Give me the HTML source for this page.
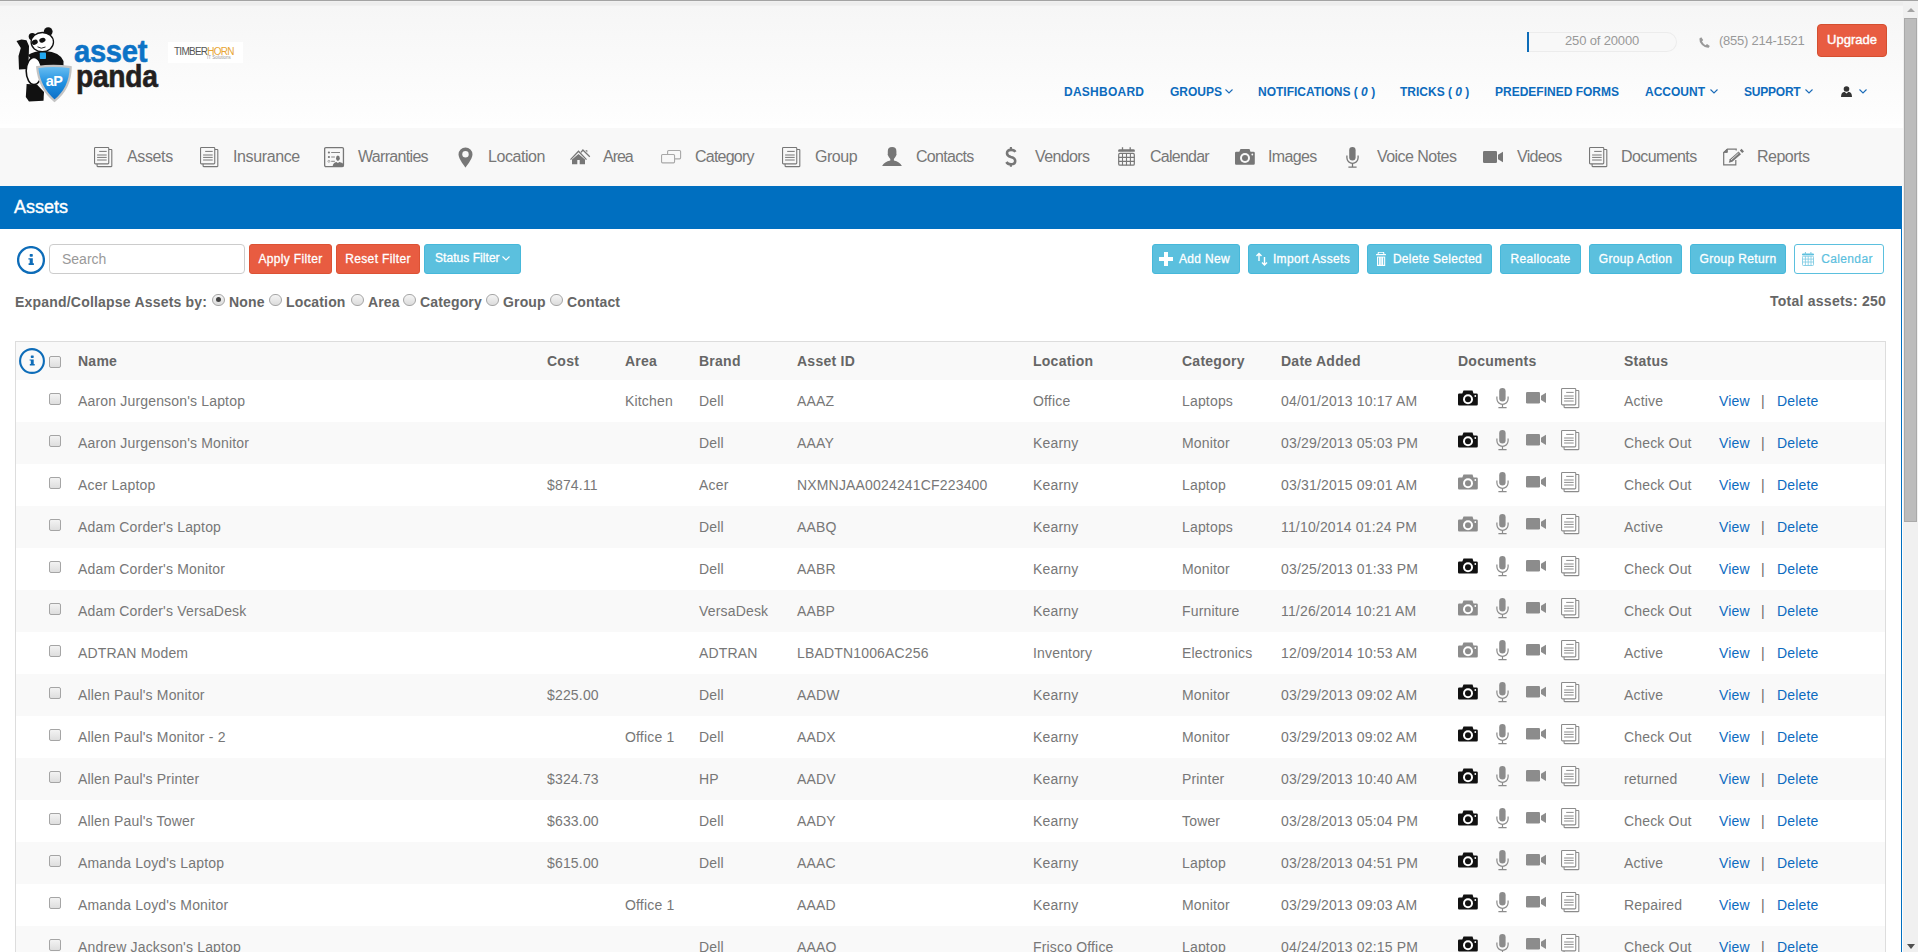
<!DOCTYPE html>
<html><head><meta charset="utf-8"><title>Asset Panda</title><style>
*{box-sizing:border-box}
html,body{margin:0;padding:0}
body{width:1918px;height:952px;overflow:hidden;position:relative;background:#fff;font-family:"Liberation Sans",sans-serif;color:#777}
.a{position:absolute}
#topline{left:0;top:0;width:1918px;height:1px;background:#a3a3a3}
#topband{left:0;top:1px;width:1903px;height:5px;background:linear-gradient(#f3f3f3,#ededed 20%,#ededed 80%,#f3f3f3)}
#header{left:0;top:6px;width:1903px;height:122px;background:linear-gradient(#f6f6f6,#fefefe 97%,#fff 97%)}
#nav{left:0;top:128px;width:1903px;height:58px;background:#f8f8f8}
#bluebar{left:0;top:186px;width:1902px;height:43px;background:#006fc0}
#blueline{left:1901px;top:229px;width:1px;height:723px;background:#006fc0}
#sb{left:1903px;top:1px;width:15px;height:951px;background:#f0f0f0}
#thumb{left:1904px;top:18px;width:13px;height:504px;background:#bcbcbc;border:1px solid #a9a9a9}
.nl{position:absolute;top:127px;height:59px;line-height:59px;font-size:16px;color:#777;white-space:nowrap;letter-spacing:-0.45px}
.tn{position:absolute;top:84.5px;font-size:12px;font-weight:bold;color:#0d6bbd;white-space:nowrap;line-height:15px}
.tn i{font-style:italic}
.btn{position:absolute;top:244px;height:30px;border-radius:3px;color:#fff;font-size:12px;line-height:28px;text-align:center;white-space:nowrap;-webkit-text-stroke:0.3px #fff;letter-spacing:0.35px}
.red{background:#e85c41;border:1px solid #dc5234}
.blu{background:#5bc0de;border:1px solid #46b8da}
.row{position:absolute;left:16px;width:1869px;height:42px}
.row .c{position:absolute;top:0;line-height:42px;font-size:14px;color:#777;white-space:nowrap;margin-left:-16px;letter-spacing:0.17px}
.row .lk{color:#0d6bbf}
.row .pp{color:#6a6a6a}
.row .cb{left:33px}
.cb{position:absolute;width:12px;height:12px;border:1px solid #a5a5a5;border-radius:2px;background:linear-gradient(#f3f3f3,#dedede)}
.ic{position:absolute;margin-left:-16px;top:0}
.th{position:absolute;line-height:38px;font-size:14px;font-weight:bold;color:#666;white-space:nowrap;letter-spacing:0.25px}
.rad{position:absolute;top:293.5px;width:12.5px;height:12.5px;border:1px solid #a5a5a5;border-radius:50%;background:linear-gradient(#f5f5f5,#dcdcdc)}
.rad i{position:absolute;left:2.5px;top:2.5px;width:5px;height:5px;border-radius:50%;background:#444}
.rl{position:absolute;top:292px;line-height:20px;font-size:14px;font-weight:bold;color:#666;white-space:nowrap;letter-spacing:0.15px}
</style></head>
<body>
<div class="a" id="topline"></div>
<div class="a" id="topband"></div>
<div class="a" id="header"></div>

<svg class="a" style="left:15px;top:25px" width="60" height="80" viewBox="0 0 60 80">
 <defs><linearGradient id="shg" x1="0" y1="0" x2="0" y2="1"><stop offset="0" stop-color="#6cc0f2"/><stop offset=".5" stop-color="#1f8fe0"/><stop offset="1" stop-color="#0b6cc4"/></linearGradient></defs>
 <circle cx="17.3" cy="11.6" r="3.6" fill="#111"/>
 <circle cx="33.2" cy="6.6" r="4.4" fill="#111"/>
 <path d="M1.5 16L6.5 14.6 11.5 15.2 14 21 13.8 30 13.2 44 4 44.5 3.5 31 5.8 23z" fill="#111"/>
 <path d="M13 30Q20 25.5 30 26Q45 27 48.5 36L48.5 41.5 30 42.5 22 38Q16 35 13 30z" fill="#111"/>
 <ellipse cx="19" cy="46" rx="7.8" ry="13.6" fill="#fff" stroke="#111" stroke-width="1.6"/>
 <path d="M11.6 59L10.8 72 14 76.5 28.5 75.8 29 67 22 59.5z" fill="#111"/>
 <ellipse cx="27.3" cy="17.1" rx="11.2" ry="9.6" fill="#fff" stroke="#111" stroke-width="1.3"/>
 <ellipse cx="19.8" cy="17.2" rx="3.1" ry="2.4" fill="#111" transform="rotate(-30 19.8 17.2)"/>
 <ellipse cx="27.4" cy="15.2" rx="3.2" ry="2.3" fill="#111" transform="rotate(-15 27.4 15.2)"/>
 <path d="M22.5 21.8Q26 24.5 30.5 22" fill="none" stroke="#111" stroke-width="0.9"/>
 <rect x="24.8" y="27.5" width="6.2" height="6.6" rx="0.8" fill="#22a8f0"/>
 <path d="M22.2 42.2Q38 39.5 55.7 42.2Q55.5 63 39.5 75.8Q24 63 22.2 42.2z" fill="url(#shg)" stroke="#c4c4c4" stroke-width="2.2"/>
 <text x="39" y="60.5" font-family="Liberation Sans" font-weight="bold" font-size="14.5" fill="#fff" text-anchor="middle" letter-spacing="-0.6">aP</text>
</svg>
<div class="a" style="left:74px;top:35px;font-size:32px;font-weight:bold;color:#0d73c6;line-height:32px;-webkit-text-stroke:0.6px #0d73c6;transform:scaleX(0.91);transform-origin:0 0;letter-spacing:-0.3px">asset</div>
<div class="a" style="left:76px;top:60.7px;font-size:31px;font-weight:bold;color:#231f20;line-height:31px;-webkit-text-stroke:0.6px #231f20;transform:scaleX(0.91);transform-origin:0 0;letter-spacing:-0.3px">panda</div>
<div class="a" style="left:168px;top:42px;width:75px;height:21px;background:#fff"></div>
<div class="a" style="left:174px;top:46px;font-size:10px;color:#555;line-height:11px;letter-spacing:-0.75px">TIMBER<span style="color:#e8a534">HORN</span></div>
<div class="a" style="left:207px;top:55px;font-size:4.5px;color:#999;line-height:5px">IT Solutions</div>


<div class="a" style="left:1527px;top:32px;width:150px;height:20px;border:1px solid #ececec;border-left:none;border-radius:0 10px 10px 0;background:#f8f8f8"></div>
<div class="a" style="left:1527px;top:32px;width:2px;height:20px;background:#0d6cb8"></div>
<div class="a" style="left:1565px;top:31px;line-height:20px;font-size:13px;color:#999;letter-spacing:-0.15px">250 of 20000</div>
<svg class="a" style="left:1699px;top:37px" width="11" height="11" viewBox="0 0 11 11"><path d="M2.3 0.3L4.2 3.1 3 4.6Q4.2 7 6.6 8.2L8 7 10.8 8.9 9.7 10.7Q6 11 3 8 0 5 0.4 1.4z" fill="#999"/></svg>
<div class="a" style="left:1719px;top:31px;line-height:20px;font-size:13px;color:#999;letter-spacing:-0.25px">(855) 214-1521</div>
<div class="a" style="left:1817px;top:24px;width:70px;height:33px;border-radius:4px;background:#e85c41;border:1px solid #d44f30;color:#fff;font-size:13px;line-height:30px;text-align:center;-webkit-text-stroke:0.4px #fff">Upgrade</div>


<span class="tn" style="left:1064px;letter-spacing:0.25px">DASHBOARD</span>
<span class="tn" style="left:1170px">GROUPS</span><svg class="a" style="left:1225px;top:89px" width="8" height="5" viewBox="0 0 8 5"><path d="M0.5 0.5L4 4 7.5 0.5" fill="none" stroke="#1a6bb8" stroke-width="1.1"/></svg>
<span class="tn" style="left:1258px">NOTIFICATIONS ( <i>0</i> )</span>
<span class="tn" style="left:1400px">TRICKS ( <i>0</i> )</span>
<span class="tn" style="left:1495px">PREDEFINED FORMS</span>
<span class="tn" style="left:1645px">ACCOUNT</span><svg class="a" style="left:1710px;top:89px" width="8" height="5" viewBox="0 0 8 5"><path d="M0.5 0.5L4 4 7.5 0.5" fill="none" stroke="#1a6bb8" stroke-width="1.1"/></svg>
<span class="tn" style="left:1744px;letter-spacing:-0.22px">SUPPORT</span><svg class="a" style="left:1805px;top:89px" width="8" height="5" viewBox="0 0 8 5"><path d="M0.5 0.5L4 4 7.5 0.5" fill="none" stroke="#1a6bb8" stroke-width="1.1"/></svg>
<svg class="a" style="left:1841px;top:86px" width="11" height="11" viewBox="0 0 11 11"><circle cx="5.5" cy="3" r="2.8" fill="#333"/><path d="M0 11C0 7.5 1.5 6 3.5 5.8L5.5 7.5 7.5 5.8C9.5 6 11 7.5 11 11z" fill="#333"/></svg>
<svg class="a" style="left:1859px;top:89px" width="8" height="5" viewBox="0 0 8 5"><path d="M0.5 0.5L4 4 7.5 0.5" fill="none" stroke="#1a6bb8" stroke-width="1.1"/></svg>

<div class="a" id="nav"></div>
<svg class="a" style="left:94px;top:147px" width="19" height="21" viewBox="0 0 19 21"><path d="M14.8 2.45H17.2a.6.6 0 0 1 .6.6V19a.6.6 0 0 1-.6.6H3.7a.6.6 0 0 1-.6-.6V16.9" fill="#f8f8f8" stroke="#777" stroke-width="1.1"/><rect x="0.55" y="0.55" width="14.2" height="16.3" rx="0.8" fill="#f8f8f8" stroke="#777" stroke-width="1.1"/><path d="M5.2 4.4H12.7M3.1 8H12.7M3.1 10.4H12.7M3.1 13H12.7" stroke="#777" stroke-width="1"/></svg><svg class="a" style="left:200px;top:147px" width="19" height="21" viewBox="0 0 19 21"><path d="M14.8 2.45H17.2a.6.6 0 0 1 .6.6V19a.6.6 0 0 1-.6.6H3.7a.6.6 0 0 1-.6-.6V16.9" fill="#f8f8f8" stroke="#777" stroke-width="1.1"/><rect x="0.55" y="0.55" width="14.2" height="16.3" rx="0.8" fill="#f8f8f8" stroke="#777" stroke-width="1.1"/><path d="M5.2 4.4H12.7M3.1 8H12.7M3.1 10.4H12.7M3.1 13H12.7" stroke="#777" stroke-width="1"/></svg><svg class="a" style="left:324px;top:147px" width="21" height="21" viewBox="0 0 21 21"><rect x="0.65" y="0.65" width="18.8" height="18.9" rx="1.2" fill="none" stroke="#777" stroke-width="1.3"/><circle cx="4.9" cy="5.5" r="1.1" fill="#777"/><circle cx="4.9" cy="10" r="1.1" fill="#777"/><circle cx="4.9" cy="14.3" r="1" fill="none" stroke="#777" stroke-width="0.6"/><path d="M7.2 5.5H16M7.2 10H10.9M7.2 14.3H10.9" stroke="#777" stroke-width="0.9"/><ellipse cx="13.9" cy="11.3" rx="1.9" ry="2.7" fill="#777"/><path d="M8.6 19.6Q9 15.6 12.4 15L13.9 16 15.4 15Q19 15.6 19.5 17.6V19.6z" fill="#777"/></svg><svg class="a" style="left:458px;top:147px" width="15" height="21" viewBox="0 0 15 21"><path d="M7.5 0.5A7 7 0 0 0 0.5 7.5C0.5 12 7.5 20.5 7.5 20.5S14.5 12 14.5 7.5A7 7 0 0 0 7.5 0.5z" fill="#777"/><circle cx="7.5" cy="7.3" r="3.2" fill="#f8f8f8"/></svg><svg class="a" style="left:570px;top:149px" width="21" height="16" viewBox="0 0 21 16"><path d="M0.5 10.6L8.5 2.3 16.5 10.6" fill="none" stroke="#777" stroke-width="1.3"/><path d="M8.5 4.9L15 10.6V15.3H9.7V10.9H7.3V15.3H2V10.6z" fill="#777"/><path d="M11 3.4L12.9 1 19.8 7.8" fill="none" stroke="#777" stroke-width="1.3"/><path d="M15.3 1.2L17.3 1.2 17.3 3.6z" fill="#777"/></svg><svg class="a" style="left:661px;top:150px" width="21" height="14" viewBox="0 0 21 14"><rect x="6.6" y="0.55" width="13" height="8.3" rx="1" fill="none" stroke="#a8a8a8" stroke-width="1.1"/><rect x="0.55" y="4.55" width="13" height="8.3" rx="1" fill="#f8f8f8" stroke="#a8a8a8" stroke-width="1.1"/></svg><svg class="a" style="left:782px;top:147px" width="19" height="21" viewBox="0 0 19 21"><path d="M14.8 2.45H17.2a.6.6 0 0 1 .6.6V19a.6.6 0 0 1-.6.6H3.7a.6.6 0 0 1-.6-.6V16.9" fill="#f8f8f8" stroke="#777" stroke-width="1.1"/><rect x="0.55" y="0.55" width="14.2" height="16.3" rx="0.8" fill="#f8f8f8" stroke="#777" stroke-width="1.1"/><path d="M5.2 4.4H12.7M3.1 8H12.7M3.1 10.4H12.7M3.1 13H12.7" stroke="#777" stroke-width="1"/></svg><svg class="a" style="left:882px;top:147px" width="20" height="20" viewBox="0 0 20 20"><path d="M5.8 4.3Q5.8 0.1 10.1 0.1Q14.4 0.1 14.4 4.3V7Q14.9 7.6 14.3 8.3Q13.2 10.8 11.9 12.1V13.6Q17.6 14.6 19.9 19.1H0.1Q2.4 14.6 8.3 13.6V12.1Q7 10.8 5.9 8.3Q5.3 7.6 5.8 7z" fill="#777"/></svg><svg class="a" style="left:1005px;top:146px" width="12" height="22" viewBox="0 0 12 22"><path d="M10.4 5.9Q9.2 3.9 6 3.9Q2 3.9 2 7.3Q2 10 5.9 11.1Q10.2 12.2 10.2 15Q10.2 18.3 6 18.3Q2.7 18.3 1.4 16" fill="none" stroke="#777" stroke-width="2.6"/><path d="M5.9 1V4M5.9 18V20.8" stroke="#777" stroke-width="2.1"/></svg><svg class="a" style="left:1118px;top:147px" width="17" height="19" viewBox="0 0 17 19"><path d="M0.2 4.8V3.6Q0.2 2.2 1.6 2.2H15.3Q16.8 2.2 16.8 3.6V4.8z" fill="#777"/><path d="M4.5 0.2V4.2M12.2 0.2V4.2" stroke="#777" stroke-width="1.3"/><rect x="0.7" y="6.4" width="15.6" height="11.8" rx="1.3" fill="none" stroke="#777" stroke-width="1.2"/><path d="M4.5 6.4V18.2M8.5 6.4V18.2M12.4 6.4V18.2M0.7 10.4H16.3M0.7 14.4H16.3" stroke="#777" stroke-width="1.1"/></svg><svg class="a" style="left:1235px;top:149px" width="20" height="16" viewBox="0 0 20 16"><path d="M5.5 0h9l1 2.8h3a1.3 1.3 0 0 1 1.3 1.3v10.4a1.3 1.3 0 0 1-1.3 1.3h-17A1.3 1.3 0 0 1 0 14.5V4.1A1.3 1.3 0 0 1 1.3 2.8h3z" fill="#777"/><circle cx="10" cy="9" r="5" fill="#f8f8f8"/><circle cx="10" cy="9" r="3" fill="#777"/><circle cx="17.3" cy="5.5" r="0.9" fill="#f8f8f8"/></svg><svg class="a" style="left:1346px;top:147px" width="13" height="21" viewBox="0 0 13 21"><rect x="3.2" y="0" width="6.4" height="13.5" rx="3.2" fill="#777"/><path d="M0.9 8.5v2.3a5.6 5.6 0 0 0 11.2 0V8.5" fill="none" stroke="#777" stroke-width="1.3"/><path d="M6.5 16.5v3.3M2.4 20.2h8.2" stroke="#777" stroke-width="1.3" fill="none"/></svg><svg class="a" style="left:1483px;top:151px" width="20" height="12" viewBox="0 0 20 12"><rect x="0" y="0" width="14" height="12" rx="1.3" fill="#777"/><path d="M15 3.8L20 0.8V11.2L15 8.2z" fill="#777"/></svg><svg class="a" style="left:1589px;top:147px" width="19" height="21" viewBox="0 0 19 21"><path d="M14.8 2.45H17.2a.6.6 0 0 1 .6.6V19a.6.6 0 0 1-.6.6H3.7a.6.6 0 0 1-.6-.6V16.9" fill="#f8f8f8" stroke="#777" stroke-width="1.1"/><rect x="0.55" y="0.55" width="14.2" height="16.3" rx="0.8" fill="#f8f8f8" stroke="#777" stroke-width="1.1"/><path d="M5.2 4.4H12.7M3.1 8H12.7M3.1 10.4H12.7M3.1 13H12.7" stroke="#777" stroke-width="1"/></svg><svg class="a" style="left:1722px;top:148px" width="23" height="18" viewBox="0 0 23 18"><path d="M5.3 1.1H14.2V2.4M13.8 12V16.8H1.7V4.4L5.3 1.1" fill="none" stroke="#777" stroke-width="1.2"/><path d="M1.7 4.4L5.3 1.1V4.4z" fill="#777" stroke="#777" stroke-width="1"/><path d="M6.8 14.8L7.8 11.2 16.6 3.6 19 6.2 10.3 13.8z" fill="#777"/><path d="M9 12L16.5 5.2" stroke="#f8f8f8" stroke-width="0.8"/><path d="M17.8 2.4L19.6 0.8 22 3.4 20.2 5z" fill="#777"/></svg>
<span class="nl" style="left:127px;letter-spacing:-0.370px">Assets</span><span class="nl" style="left:233px;letter-spacing:-0.388px">Insurance</span><span class="nl" style="left:358px;letter-spacing:-0.683px">Warranties</span><span class="nl" style="left:488px;letter-spacing:-0.450px">Location</span><span class="nl" style="left:603px;letter-spacing:-1.017px">Area</span><span class="nl" style="left:695px;letter-spacing:-0.779px">Category</span><span class="nl" style="left:815px;letter-spacing:-0.450px">Group</span><span class="nl" style="left:916px;letter-spacing:-0.693px">Contacts</span><span class="nl" style="left:1035px;letter-spacing:-0.617px">Vendors</span><span class="nl" style="left:1150px;letter-spacing:-0.750px">Calendar</span><span class="nl" style="left:1268px;letter-spacing:-0.650px">Images</span><span class="nl" style="left:1377px;letter-spacing:-0.550px">Voice Notes</span><span class="nl" style="left:1517px;letter-spacing:-0.690px">Videos</span><span class="nl" style="left:1621px;letter-spacing:-0.588px">Documents</span><span class="nl" style="left:1757px;letter-spacing:-0.517px">Reports</span>
<div class="a" id="bluebar"></div>
<div class="a" id="blueline"></div>
<div class="a" style="left:14px;top:186px;height:43px;line-height:43px;font-size:18px;color:#fff;-webkit-text-stroke:0.4px #fff">Assets</div>

<svg class="a" style="left:17px;top:246px" width="28" height="28" viewBox="0 0 28 28"><circle cx="14" cy="14" r="12.9" fill="#fff" stroke="#0d6cb8" stroke-width="2.3"/><rect x="12.7" y="8.1" width="3.1" height="2.6" rx="0.6" fill="#0d6cb8"/><path d="M11.4 12.3H15.8V17.3H16.9V18.9H11.6V17.3H12.7V13.6H11.4z" fill="#0d6cb8"/></svg>
<div class="a" style="left:49px;top:244px;width:196px;height:30px;border:1px solid #ccc;border-radius:4px;background:#fff"></div>
<div class="a" style="left:62px;top:244px;line-height:30px;font-size:14px;color:#999">Search</div>
<div class="btn red" style="left:249px;width:83px">Apply Filter</div>
<div class="btn red" style="left:336px;width:84px">Reset Filter</div>
<div class="btn blu" style="left:424px;width:97px"></div><div class="a" style="left:435px;top:244px;line-height:28px;font-size:12px;color:#fff;-webkit-text-stroke:0.3px #fff;letter-spacing:0.05px">Status Filter</div><svg class="a" style="left:502px;top:256px" width="8" height="5" viewBox="0 0 8 5"><path d="M0.5 0.5L4 4 7.5 0.5" fill="none" stroke="#fff" stroke-width="1.1"/></svg>
<div class="btn blu" style="left:1152px;width:88px;padding-left:17px">Add New</div>
<svg class="a" style="left:1159px;top:252px" width="14" height="14" viewBox="0 0 14 14"><path d="M5 0h4v5h5v4H9v5H5V9H0V5h5z" fill="#fff"/></svg>
<div class="btn blu" style="left:1248px;width:111px;padding-left:16px">Import Assets</div>
<svg class="a" style="left:1256px;top:252px" width="12" height="14" viewBox="0 0 12 14"><path d="M3 1.5v7.5M0.5 4L3 1.5 5.5 4M8.5 5v8M6 10.5L8.5 13 11 10.5" fill="none" stroke="#fff" stroke-width="1.4"/></svg>
<div class="btn blu" style="left:1367px;width:125px;padding-left:16px;letter-spacing:0.3px">Delete Selected</div>
<svg class="a" style="left:1376px;top:252px" width="10" height="14" viewBox="0 0 10 14"><path d="M2.2 2.2V1.2Q2.2 0.2 3.2 0.2H6.8Q7.8 0.2 7.8 1.2V2.2" fill="none" stroke="#fff" stroke-width="1.1"/><rect x="0" y="2" width="10" height="1.3" rx="0.5" fill="#fff"/><rect x="1" y="4.6" width="8.2" height="9.4" fill="#fff"/><path d="M2.6 5.5V12.8M7.6 5.5V12.8" stroke="#5bc0de" stroke-width="0.9"/><path d="M5.1 5.5V12.8" stroke="#9fdaec" stroke-width="0.9"/></svg>
<div class="btn blu" style="left:1500px;width:81px">Reallocate</div>
<div class="btn blu" style="left:1589px;width:93px">Group Action</div>
<div class="btn blu" style="left:1690px;width:96px">Group Return</div>
<div class="btn" style="left:1794px;width:90px;border:1px solid #5bc0de;background:#fff;color:#5bc0de;padding-left:16px;-webkit-text-stroke:0.2px #5bc0de">Calendar</div>
<svg class="a" style="left:1802px;top:252px" width="12" height="14" viewBox="0 0 12 14"><path d="M0 3.2V2.6Q0 1.6 1 1.6H11Q12 1.6 12 2.6V3.2z" fill="#5bc0de"/><path d="M3.4 0V2.6M8.9 0V2.6" stroke="#7cc9e2" stroke-width="1"/><rect x="0.45" y="4.2" width="11.1" height="9.3" rx="1" fill="none" stroke="#7cc9e2" stroke-width="0.9"/><path d="M3.4 4.2V13.5M6.2 4.2V13.5M9 4.2V13.5M0.45 7.1H11.55M0.45 10H11.55" stroke="#7cc9e2" stroke-width="0.8"/></svg>

<div class="a" style="left:15px;top:292px;line-height:20px;font-size:14px;font-weight:bold;color:#666;white-space:nowrap;letter-spacing:0.2px">Expand/Collapse Assets by:</div>
<span class="rad" style="left:212px"><i></i></span><span class="rl" style="left:229px">None</span>
<span class="rad" style="left:269px"></span><span class="rl" style="left:286px">Location</span>
<span class="rad" style="left:351px"></span><span class="rl" style="left:368px">Area</span>
<span class="rad" style="left:403px"></span><span class="rl" style="left:420px">Category</span>
<span class="rad" style="left:486px"></span><span class="rl" style="left:503px">Group</span>
<span class="rad" style="left:550px"></span><span class="rl" style="left:567px">Contact</span>
<div class="a" style="left:1770px;top:291px;line-height:20px;font-size:14px;font-weight:bold;color:#666;white-space:nowrap;letter-spacing:0.25px">Total assets: 250</div>

<div class="a" style="left:15px;top:341px;width:1871px;height:611px;border:1px solid #ddd;border-bottom:none"></div>
<div class="a" style="left:16px;top:342px;width:1869px;height:38px;background:#f9f9f9"></div>

<svg class="a" style="left:19px;top:348px" width="26" height="26" viewBox="0 0 26 26"><circle cx="13" cy="13" r="11.9" fill="none" stroke="#0d6cb8" stroke-width="2.1"/><rect x="11.8" y="7.5" width="2.9" height="2.4" rx="0.6" fill="#0d6cb8"/><path d="M10.6 11.4H14.7V16.1H15.7V17.6H10.8V16.1H11.8V12.6H10.6z" fill="#0d6cb8"/></svg>
<span class="cb" style="left:49px;top:356px"></span>
<span class="th" style="left:78px;top:342px">Name</span><span class="th" style="left:547px;top:342px">Cost</span><span class="th" style="left:625px;top:342px">Area</span><span class="th" style="left:699px;top:342px">Brand</span><span class="th" style="left:797px;top:342px">Asset ID</span><span class="th" style="left:1033px;top:342px">Location</span><span class="th" style="left:1182px;top:342px">Category</span><span class="th" style="left:1281px;top:342px">Date Added</span><span class="th" style="left:1458px;top:342px">Documents</span><span class="th" style="left:1624px;top:342px">Status</span>
<div class="row" style="top:380px;background:#fff"><span class="cb" style="top:13px"></span><span class="c" style="left:78px">Aaron Jurgenson&#x27;s Laptop</span><span class="c" style="left:625px">Kitchen</span><span class="c" style="left:699px">Dell</span><span class="c" style="left:797px">AAAZ</span><span class="c" style="left:1033px">Office</span><span class="c" style="left:1182px">Laptops</span><span class="c" style="left:1281px">04/01/2013 10:17 AM</span><svg class="ic" style="left:1458px;top:10px" width="20" height="17" viewBox="0 0 20 17"><path fill="#111" d="M5.5 0.5h9l1 3h3a1.3 1.3 0 0 1 1.3 1.3v9.4a1.3 1.3 0 0 1-1.3 1.3h-17A1.3 1.3 0 0 1 0 14.2V4.8A1.3 1.3 0 0 1 1.3 3.5h3z"/><circle cx="10" cy="9.3" r="5" fill="#fff"/><circle cx="10" cy="9.3" r="3" fill="#111"/><circle cx="17.3" cy="6" r="0.9" fill="#fff"/></svg><svg class="ic" style="left:1496px;top:7.5px" width="13" height="21" viewBox="0 0 13 21"><rect x="3.2" y="0" width="6.4" height="13.5" rx="3.2" fill="#8c8c8c"/><path d="M0.9 8.5v2.3a5.6 5.6 0 0 0 11.2 0V8.5" fill="none" stroke="#8c8c8c" stroke-width="1.2"/><path d="M6.5 16.3v3M2.4 19.6h8.2" stroke="#8c8c8c" stroke-width="1.2" fill="none"/></svg><svg class="ic" style="left:1526px;top:12px" width="21" height="12" viewBox="0 0 21 12"><rect x="0" y="0" width="14" height="11.6" rx="1.3" fill="#8c8c8c"/><path d="M15 3.8L20 0.8V10.9L15 8z" fill="#8c8c8c"/></svg><svg class="ic" style="left:1561px;top:8px" width="19" height="21" viewBox="0 0 19 21"><path d="M14.8 2.45H17.2a.6.6 0 0 1 .6.6V19a.6.6 0 0 1-.6.6H3.7a.6.6 0 0 1-.6-.6V16.9" fill="#fff" stroke="#8c8c8c" stroke-width="1.1"/><rect x="0.55" y="0.55" width="14.2" height="16.3" rx="0.8" fill="#fff" stroke="#8c8c8c" stroke-width="1.1"/><path d="M5.2 4.4H12.7M3.1 8H12.7M3.1 10.4H12.7M3.1 13H12.7" stroke="#8c8c8c" stroke-width="1"/></svg><span class="c" style="left:1624px">Active</span><span class="c lk" style="left:1719px">View</span><span class="c pp" style="left:1761px">|</span><span class="c lk" style="left:1777px">Delete</span></div>
<div class="row" style="top:422px;background:#f9f9f9"><span class="cb" style="top:13px"></span><span class="c" style="left:78px">Aaron Jurgenson&#x27;s Monitor</span><span class="c" style="left:699px">Dell</span><span class="c" style="left:797px">AAAY</span><span class="c" style="left:1033px">Kearny</span><span class="c" style="left:1182px">Monitor</span><span class="c" style="left:1281px">03/29/2013 05:03 PM</span><svg class="ic" style="left:1458px;top:10px" width="20" height="17" viewBox="0 0 20 17"><path fill="#111" d="M5.5 0.5h9l1 3h3a1.3 1.3 0 0 1 1.3 1.3v9.4a1.3 1.3 0 0 1-1.3 1.3h-17A1.3 1.3 0 0 1 0 14.2V4.8A1.3 1.3 0 0 1 1.3 3.5h3z"/><circle cx="10" cy="9.3" r="5" fill="#fff"/><circle cx="10" cy="9.3" r="3" fill="#111"/><circle cx="17.3" cy="6" r="0.9" fill="#fff"/></svg><svg class="ic" style="left:1496px;top:7.5px" width="13" height="21" viewBox="0 0 13 21"><rect x="3.2" y="0" width="6.4" height="13.5" rx="3.2" fill="#8c8c8c"/><path d="M0.9 8.5v2.3a5.6 5.6 0 0 0 11.2 0V8.5" fill="none" stroke="#8c8c8c" stroke-width="1.2"/><path d="M6.5 16.3v3M2.4 19.6h8.2" stroke="#8c8c8c" stroke-width="1.2" fill="none"/></svg><svg class="ic" style="left:1526px;top:12px" width="21" height="12" viewBox="0 0 21 12"><rect x="0" y="0" width="14" height="11.6" rx="1.3" fill="#8c8c8c"/><path d="M15 3.8L20 0.8V10.9L15 8z" fill="#8c8c8c"/></svg><svg class="ic" style="left:1561px;top:8px" width="19" height="21" viewBox="0 0 19 21"><path d="M14.8 2.45H17.2a.6.6 0 0 1 .6.6V19a.6.6 0 0 1-.6.6H3.7a.6.6 0 0 1-.6-.6V16.9" fill="#fff" stroke="#8c8c8c" stroke-width="1.1"/><rect x="0.55" y="0.55" width="14.2" height="16.3" rx="0.8" fill="#fff" stroke="#8c8c8c" stroke-width="1.1"/><path d="M5.2 4.4H12.7M3.1 8H12.7M3.1 10.4H12.7M3.1 13H12.7" stroke="#8c8c8c" stroke-width="1"/></svg><span class="c" style="left:1624px">Check Out</span><span class="c lk" style="left:1719px">View</span><span class="c pp" style="left:1761px">|</span><span class="c lk" style="left:1777px">Delete</span></div>
<div class="row" style="top:464px;background:#fff"><span class="cb" style="top:13px"></span><span class="c" style="left:78px">Acer Laptop</span><span class="c" style="left:547px">$874.11</span><span class="c" style="left:699px">Acer</span><span class="c" style="left:797px">NXMNJAA0024241CF223400</span><span class="c" style="left:1033px">Kearny</span><span class="c" style="left:1182px">Laptop</span><span class="c" style="left:1281px">03/31/2015 09:01 AM</span><svg class="ic" style="left:1458px;top:10px" width="20" height="17" viewBox="0 0 20 17"><path fill="#8c8c8c" d="M5.5 0.5h9l1 3h3a1.3 1.3 0 0 1 1.3 1.3v9.4a1.3 1.3 0 0 1-1.3 1.3h-17A1.3 1.3 0 0 1 0 14.2V4.8A1.3 1.3 0 0 1 1.3 3.5h3z"/><circle cx="10" cy="9.3" r="5" fill="#fff"/><circle cx="10" cy="9.3" r="3" fill="#8c8c8c"/><circle cx="17.3" cy="6" r="0.9" fill="#fff"/></svg><svg class="ic" style="left:1496px;top:7.5px" width="13" height="21" viewBox="0 0 13 21"><rect x="3.2" y="0" width="6.4" height="13.5" rx="3.2" fill="#8c8c8c"/><path d="M0.9 8.5v2.3a5.6 5.6 0 0 0 11.2 0V8.5" fill="none" stroke="#8c8c8c" stroke-width="1.2"/><path d="M6.5 16.3v3M2.4 19.6h8.2" stroke="#8c8c8c" stroke-width="1.2" fill="none"/></svg><svg class="ic" style="left:1526px;top:12px" width="21" height="12" viewBox="0 0 21 12"><rect x="0" y="0" width="14" height="11.6" rx="1.3" fill="#8c8c8c"/><path d="M15 3.8L20 0.8V10.9L15 8z" fill="#8c8c8c"/></svg><svg class="ic" style="left:1561px;top:8px" width="19" height="21" viewBox="0 0 19 21"><path d="M14.8 2.45H17.2a.6.6 0 0 1 .6.6V19a.6.6 0 0 1-.6.6H3.7a.6.6 0 0 1-.6-.6V16.9" fill="#fff" stroke="#8c8c8c" stroke-width="1.1"/><rect x="0.55" y="0.55" width="14.2" height="16.3" rx="0.8" fill="#fff" stroke="#8c8c8c" stroke-width="1.1"/><path d="M5.2 4.4H12.7M3.1 8H12.7M3.1 10.4H12.7M3.1 13H12.7" stroke="#8c8c8c" stroke-width="1"/></svg><span class="c" style="left:1624px">Check Out</span><span class="c lk" style="left:1719px">View</span><span class="c pp" style="left:1761px">|</span><span class="c lk" style="left:1777px">Delete</span></div>
<div class="row" style="top:506px;background:#f9f9f9"><span class="cb" style="top:13px"></span><span class="c" style="left:78px">Adam Corder&#x27;s Laptop</span><span class="c" style="left:699px">Dell</span><span class="c" style="left:797px">AABQ</span><span class="c" style="left:1033px">Kearny</span><span class="c" style="left:1182px">Laptops</span><span class="c" style="left:1281px">11/10/2014 01:24 PM</span><svg class="ic" style="left:1458px;top:10px" width="20" height="17" viewBox="0 0 20 17"><path fill="#8c8c8c" d="M5.5 0.5h9l1 3h3a1.3 1.3 0 0 1 1.3 1.3v9.4a1.3 1.3 0 0 1-1.3 1.3h-17A1.3 1.3 0 0 1 0 14.2V4.8A1.3 1.3 0 0 1 1.3 3.5h3z"/><circle cx="10" cy="9.3" r="5" fill="#fff"/><circle cx="10" cy="9.3" r="3" fill="#8c8c8c"/><circle cx="17.3" cy="6" r="0.9" fill="#fff"/></svg><svg class="ic" style="left:1496px;top:7.5px" width="13" height="21" viewBox="0 0 13 21"><rect x="3.2" y="0" width="6.4" height="13.5" rx="3.2" fill="#8c8c8c"/><path d="M0.9 8.5v2.3a5.6 5.6 0 0 0 11.2 0V8.5" fill="none" stroke="#8c8c8c" stroke-width="1.2"/><path d="M6.5 16.3v3M2.4 19.6h8.2" stroke="#8c8c8c" stroke-width="1.2" fill="none"/></svg><svg class="ic" style="left:1526px;top:12px" width="21" height="12" viewBox="0 0 21 12"><rect x="0" y="0" width="14" height="11.6" rx="1.3" fill="#8c8c8c"/><path d="M15 3.8L20 0.8V10.9L15 8z" fill="#8c8c8c"/></svg><svg class="ic" style="left:1561px;top:8px" width="19" height="21" viewBox="0 0 19 21"><path d="M14.8 2.45H17.2a.6.6 0 0 1 .6.6V19a.6.6 0 0 1-.6.6H3.7a.6.6 0 0 1-.6-.6V16.9" fill="#fff" stroke="#8c8c8c" stroke-width="1.1"/><rect x="0.55" y="0.55" width="14.2" height="16.3" rx="0.8" fill="#fff" stroke="#8c8c8c" stroke-width="1.1"/><path d="M5.2 4.4H12.7M3.1 8H12.7M3.1 10.4H12.7M3.1 13H12.7" stroke="#8c8c8c" stroke-width="1"/></svg><span class="c" style="left:1624px">Active</span><span class="c lk" style="left:1719px">View</span><span class="c pp" style="left:1761px">|</span><span class="c lk" style="left:1777px">Delete</span></div>
<div class="row" style="top:548px;background:#fff"><span class="cb" style="top:13px"></span><span class="c" style="left:78px">Adam Corder&#x27;s Monitor</span><span class="c" style="left:699px">Dell</span><span class="c" style="left:797px">AABR</span><span class="c" style="left:1033px">Kearny</span><span class="c" style="left:1182px">Monitor</span><span class="c" style="left:1281px">03/25/2013 01:33 PM</span><svg class="ic" style="left:1458px;top:10px" width="20" height="17" viewBox="0 0 20 17"><path fill="#111" d="M5.5 0.5h9l1 3h3a1.3 1.3 0 0 1 1.3 1.3v9.4a1.3 1.3 0 0 1-1.3 1.3h-17A1.3 1.3 0 0 1 0 14.2V4.8A1.3 1.3 0 0 1 1.3 3.5h3z"/><circle cx="10" cy="9.3" r="5" fill="#fff"/><circle cx="10" cy="9.3" r="3" fill="#111"/><circle cx="17.3" cy="6" r="0.9" fill="#fff"/></svg><svg class="ic" style="left:1496px;top:7.5px" width="13" height="21" viewBox="0 0 13 21"><rect x="3.2" y="0" width="6.4" height="13.5" rx="3.2" fill="#8c8c8c"/><path d="M0.9 8.5v2.3a5.6 5.6 0 0 0 11.2 0V8.5" fill="none" stroke="#8c8c8c" stroke-width="1.2"/><path d="M6.5 16.3v3M2.4 19.6h8.2" stroke="#8c8c8c" stroke-width="1.2" fill="none"/></svg><svg class="ic" style="left:1526px;top:12px" width="21" height="12" viewBox="0 0 21 12"><rect x="0" y="0" width="14" height="11.6" rx="1.3" fill="#8c8c8c"/><path d="M15 3.8L20 0.8V10.9L15 8z" fill="#8c8c8c"/></svg><svg class="ic" style="left:1561px;top:8px" width="19" height="21" viewBox="0 0 19 21"><path d="M14.8 2.45H17.2a.6.6 0 0 1 .6.6V19a.6.6 0 0 1-.6.6H3.7a.6.6 0 0 1-.6-.6V16.9" fill="#fff" stroke="#8c8c8c" stroke-width="1.1"/><rect x="0.55" y="0.55" width="14.2" height="16.3" rx="0.8" fill="#fff" stroke="#8c8c8c" stroke-width="1.1"/><path d="M5.2 4.4H12.7M3.1 8H12.7M3.1 10.4H12.7M3.1 13H12.7" stroke="#8c8c8c" stroke-width="1"/></svg><span class="c" style="left:1624px">Check Out</span><span class="c lk" style="left:1719px">View</span><span class="c pp" style="left:1761px">|</span><span class="c lk" style="left:1777px">Delete</span></div>
<div class="row" style="top:590px;background:#f9f9f9"><span class="cb" style="top:13px"></span><span class="c" style="left:78px">Adam Corder&#x27;s VersaDesk</span><span class="c" style="left:699px">VersaDesk</span><span class="c" style="left:797px">AABP</span><span class="c" style="left:1033px">Kearny</span><span class="c" style="left:1182px">Furniture</span><span class="c" style="left:1281px">11/26/2014 10:21 AM</span><svg class="ic" style="left:1458px;top:10px" width="20" height="17" viewBox="0 0 20 17"><path fill="#8c8c8c" d="M5.5 0.5h9l1 3h3a1.3 1.3 0 0 1 1.3 1.3v9.4a1.3 1.3 0 0 1-1.3 1.3h-17A1.3 1.3 0 0 1 0 14.2V4.8A1.3 1.3 0 0 1 1.3 3.5h3z"/><circle cx="10" cy="9.3" r="5" fill="#fff"/><circle cx="10" cy="9.3" r="3" fill="#8c8c8c"/><circle cx="17.3" cy="6" r="0.9" fill="#fff"/></svg><svg class="ic" style="left:1496px;top:7.5px" width="13" height="21" viewBox="0 0 13 21"><rect x="3.2" y="0" width="6.4" height="13.5" rx="3.2" fill="#8c8c8c"/><path d="M0.9 8.5v2.3a5.6 5.6 0 0 0 11.2 0V8.5" fill="none" stroke="#8c8c8c" stroke-width="1.2"/><path d="M6.5 16.3v3M2.4 19.6h8.2" stroke="#8c8c8c" stroke-width="1.2" fill="none"/></svg><svg class="ic" style="left:1526px;top:12px" width="21" height="12" viewBox="0 0 21 12"><rect x="0" y="0" width="14" height="11.6" rx="1.3" fill="#8c8c8c"/><path d="M15 3.8L20 0.8V10.9L15 8z" fill="#8c8c8c"/></svg><svg class="ic" style="left:1561px;top:8px" width="19" height="21" viewBox="0 0 19 21"><path d="M14.8 2.45H17.2a.6.6 0 0 1 .6.6V19a.6.6 0 0 1-.6.6H3.7a.6.6 0 0 1-.6-.6V16.9" fill="#fff" stroke="#8c8c8c" stroke-width="1.1"/><rect x="0.55" y="0.55" width="14.2" height="16.3" rx="0.8" fill="#fff" stroke="#8c8c8c" stroke-width="1.1"/><path d="M5.2 4.4H12.7M3.1 8H12.7M3.1 10.4H12.7M3.1 13H12.7" stroke="#8c8c8c" stroke-width="1"/></svg><span class="c" style="left:1624px">Check Out</span><span class="c lk" style="left:1719px">View</span><span class="c pp" style="left:1761px">|</span><span class="c lk" style="left:1777px">Delete</span></div>
<div class="row" style="top:632px;background:#fff"><span class="cb" style="top:13px"></span><span class="c" style="left:78px">ADTRAN Modem</span><span class="c" style="left:699px">ADTRAN</span><span class="c" style="left:797px">LBADTN1006AC256</span><span class="c" style="left:1033px">Inventory</span><span class="c" style="left:1182px">Electronics</span><span class="c" style="left:1281px">12/09/2014 10:53 AM</span><svg class="ic" style="left:1458px;top:10px" width="20" height="17" viewBox="0 0 20 17"><path fill="#8c8c8c" d="M5.5 0.5h9l1 3h3a1.3 1.3 0 0 1 1.3 1.3v9.4a1.3 1.3 0 0 1-1.3 1.3h-17A1.3 1.3 0 0 1 0 14.2V4.8A1.3 1.3 0 0 1 1.3 3.5h3z"/><circle cx="10" cy="9.3" r="5" fill="#fff"/><circle cx="10" cy="9.3" r="3" fill="#8c8c8c"/><circle cx="17.3" cy="6" r="0.9" fill="#fff"/></svg><svg class="ic" style="left:1496px;top:7.5px" width="13" height="21" viewBox="0 0 13 21"><rect x="3.2" y="0" width="6.4" height="13.5" rx="3.2" fill="#8c8c8c"/><path d="M0.9 8.5v2.3a5.6 5.6 0 0 0 11.2 0V8.5" fill="none" stroke="#8c8c8c" stroke-width="1.2"/><path d="M6.5 16.3v3M2.4 19.6h8.2" stroke="#8c8c8c" stroke-width="1.2" fill="none"/></svg><svg class="ic" style="left:1526px;top:12px" width="21" height="12" viewBox="0 0 21 12"><rect x="0" y="0" width="14" height="11.6" rx="1.3" fill="#8c8c8c"/><path d="M15 3.8L20 0.8V10.9L15 8z" fill="#8c8c8c"/></svg><svg class="ic" style="left:1561px;top:8px" width="19" height="21" viewBox="0 0 19 21"><path d="M14.8 2.45H17.2a.6.6 0 0 1 .6.6V19a.6.6 0 0 1-.6.6H3.7a.6.6 0 0 1-.6-.6V16.9" fill="#fff" stroke="#8c8c8c" stroke-width="1.1"/><rect x="0.55" y="0.55" width="14.2" height="16.3" rx="0.8" fill="#fff" stroke="#8c8c8c" stroke-width="1.1"/><path d="M5.2 4.4H12.7M3.1 8H12.7M3.1 10.4H12.7M3.1 13H12.7" stroke="#8c8c8c" stroke-width="1"/></svg><span class="c" style="left:1624px">Active</span><span class="c lk" style="left:1719px">View</span><span class="c pp" style="left:1761px">|</span><span class="c lk" style="left:1777px">Delete</span></div>
<div class="row" style="top:674px;background:#f9f9f9"><span class="cb" style="top:13px"></span><span class="c" style="left:78px">Allen Paul&#x27;s Monitor</span><span class="c" style="left:547px">$225.00</span><span class="c" style="left:699px">Dell</span><span class="c" style="left:797px">AADW</span><span class="c" style="left:1033px">Kearny</span><span class="c" style="left:1182px">Monitor</span><span class="c" style="left:1281px">03/29/2013 09:02 AM</span><svg class="ic" style="left:1458px;top:10px" width="20" height="17" viewBox="0 0 20 17"><path fill="#111" d="M5.5 0.5h9l1 3h3a1.3 1.3 0 0 1 1.3 1.3v9.4a1.3 1.3 0 0 1-1.3 1.3h-17A1.3 1.3 0 0 1 0 14.2V4.8A1.3 1.3 0 0 1 1.3 3.5h3z"/><circle cx="10" cy="9.3" r="5" fill="#fff"/><circle cx="10" cy="9.3" r="3" fill="#111"/><circle cx="17.3" cy="6" r="0.9" fill="#fff"/></svg><svg class="ic" style="left:1496px;top:7.5px" width="13" height="21" viewBox="0 0 13 21"><rect x="3.2" y="0" width="6.4" height="13.5" rx="3.2" fill="#8c8c8c"/><path d="M0.9 8.5v2.3a5.6 5.6 0 0 0 11.2 0V8.5" fill="none" stroke="#8c8c8c" stroke-width="1.2"/><path d="M6.5 16.3v3M2.4 19.6h8.2" stroke="#8c8c8c" stroke-width="1.2" fill="none"/></svg><svg class="ic" style="left:1526px;top:12px" width="21" height="12" viewBox="0 0 21 12"><rect x="0" y="0" width="14" height="11.6" rx="1.3" fill="#8c8c8c"/><path d="M15 3.8L20 0.8V10.9L15 8z" fill="#8c8c8c"/></svg><svg class="ic" style="left:1561px;top:8px" width="19" height="21" viewBox="0 0 19 21"><path d="M14.8 2.45H17.2a.6.6 0 0 1 .6.6V19a.6.6 0 0 1-.6.6H3.7a.6.6 0 0 1-.6-.6V16.9" fill="#fff" stroke="#8c8c8c" stroke-width="1.1"/><rect x="0.55" y="0.55" width="14.2" height="16.3" rx="0.8" fill="#fff" stroke="#8c8c8c" stroke-width="1.1"/><path d="M5.2 4.4H12.7M3.1 8H12.7M3.1 10.4H12.7M3.1 13H12.7" stroke="#8c8c8c" stroke-width="1"/></svg><span class="c" style="left:1624px">Active</span><span class="c lk" style="left:1719px">View</span><span class="c pp" style="left:1761px">|</span><span class="c lk" style="left:1777px">Delete</span></div>
<div class="row" style="top:716px;background:#fff"><span class="cb" style="top:13px"></span><span class="c" style="left:78px">Allen Paul&#x27;s Monitor - 2</span><span class="c" style="left:625px">Office 1</span><span class="c" style="left:699px">Dell</span><span class="c" style="left:797px">AADX</span><span class="c" style="left:1033px">Kearny</span><span class="c" style="left:1182px">Monitor</span><span class="c" style="left:1281px">03/29/2013 09:02 AM</span><svg class="ic" style="left:1458px;top:10px" width="20" height="17" viewBox="0 0 20 17"><path fill="#111" d="M5.5 0.5h9l1 3h3a1.3 1.3 0 0 1 1.3 1.3v9.4a1.3 1.3 0 0 1-1.3 1.3h-17A1.3 1.3 0 0 1 0 14.2V4.8A1.3 1.3 0 0 1 1.3 3.5h3z"/><circle cx="10" cy="9.3" r="5" fill="#fff"/><circle cx="10" cy="9.3" r="3" fill="#111"/><circle cx="17.3" cy="6" r="0.9" fill="#fff"/></svg><svg class="ic" style="left:1496px;top:7.5px" width="13" height="21" viewBox="0 0 13 21"><rect x="3.2" y="0" width="6.4" height="13.5" rx="3.2" fill="#8c8c8c"/><path d="M0.9 8.5v2.3a5.6 5.6 0 0 0 11.2 0V8.5" fill="none" stroke="#8c8c8c" stroke-width="1.2"/><path d="M6.5 16.3v3M2.4 19.6h8.2" stroke="#8c8c8c" stroke-width="1.2" fill="none"/></svg><svg class="ic" style="left:1526px;top:12px" width="21" height="12" viewBox="0 0 21 12"><rect x="0" y="0" width="14" height="11.6" rx="1.3" fill="#8c8c8c"/><path d="M15 3.8L20 0.8V10.9L15 8z" fill="#8c8c8c"/></svg><svg class="ic" style="left:1561px;top:8px" width="19" height="21" viewBox="0 0 19 21"><path d="M14.8 2.45H17.2a.6.6 0 0 1 .6.6V19a.6.6 0 0 1-.6.6H3.7a.6.6 0 0 1-.6-.6V16.9" fill="#fff" stroke="#8c8c8c" stroke-width="1.1"/><rect x="0.55" y="0.55" width="14.2" height="16.3" rx="0.8" fill="#fff" stroke="#8c8c8c" stroke-width="1.1"/><path d="M5.2 4.4H12.7M3.1 8H12.7M3.1 10.4H12.7M3.1 13H12.7" stroke="#8c8c8c" stroke-width="1"/></svg><span class="c" style="left:1624px">Check Out</span><span class="c lk" style="left:1719px">View</span><span class="c pp" style="left:1761px">|</span><span class="c lk" style="left:1777px">Delete</span></div>
<div class="row" style="top:758px;background:#f9f9f9"><span class="cb" style="top:13px"></span><span class="c" style="left:78px">Allen Paul&#x27;s Printer</span><span class="c" style="left:547px">$324.73</span><span class="c" style="left:699px">HP</span><span class="c" style="left:797px">AADV</span><span class="c" style="left:1033px">Kearny</span><span class="c" style="left:1182px">Printer</span><span class="c" style="left:1281px">03/29/2013 10:40 AM</span><svg class="ic" style="left:1458px;top:10px" width="20" height="17" viewBox="0 0 20 17"><path fill="#111" d="M5.5 0.5h9l1 3h3a1.3 1.3 0 0 1 1.3 1.3v9.4a1.3 1.3 0 0 1-1.3 1.3h-17A1.3 1.3 0 0 1 0 14.2V4.8A1.3 1.3 0 0 1 1.3 3.5h3z"/><circle cx="10" cy="9.3" r="5" fill="#fff"/><circle cx="10" cy="9.3" r="3" fill="#111"/><circle cx="17.3" cy="6" r="0.9" fill="#fff"/></svg><svg class="ic" style="left:1496px;top:7.5px" width="13" height="21" viewBox="0 0 13 21"><rect x="3.2" y="0" width="6.4" height="13.5" rx="3.2" fill="#8c8c8c"/><path d="M0.9 8.5v2.3a5.6 5.6 0 0 0 11.2 0V8.5" fill="none" stroke="#8c8c8c" stroke-width="1.2"/><path d="M6.5 16.3v3M2.4 19.6h8.2" stroke="#8c8c8c" stroke-width="1.2" fill="none"/></svg><svg class="ic" style="left:1526px;top:12px" width="21" height="12" viewBox="0 0 21 12"><rect x="0" y="0" width="14" height="11.6" rx="1.3" fill="#8c8c8c"/><path d="M15 3.8L20 0.8V10.9L15 8z" fill="#8c8c8c"/></svg><svg class="ic" style="left:1561px;top:8px" width="19" height="21" viewBox="0 0 19 21"><path d="M14.8 2.45H17.2a.6.6 0 0 1 .6.6V19a.6.6 0 0 1-.6.6H3.7a.6.6 0 0 1-.6-.6V16.9" fill="#fff" stroke="#8c8c8c" stroke-width="1.1"/><rect x="0.55" y="0.55" width="14.2" height="16.3" rx="0.8" fill="#fff" stroke="#8c8c8c" stroke-width="1.1"/><path d="M5.2 4.4H12.7M3.1 8H12.7M3.1 10.4H12.7M3.1 13H12.7" stroke="#8c8c8c" stroke-width="1"/></svg><span class="c" style="left:1624px">returned</span><span class="c lk" style="left:1719px">View</span><span class="c pp" style="left:1761px">|</span><span class="c lk" style="left:1777px">Delete</span></div>
<div class="row" style="top:800px;background:#fff"><span class="cb" style="top:13px"></span><span class="c" style="left:78px">Allen Paul&#x27;s Tower</span><span class="c" style="left:547px">$633.00</span><span class="c" style="left:699px">Dell</span><span class="c" style="left:797px">AADY</span><span class="c" style="left:1033px">Kearny</span><span class="c" style="left:1182px">Tower</span><span class="c" style="left:1281px">03/28/2013 05:04 PM</span><svg class="ic" style="left:1458px;top:10px" width="20" height="17" viewBox="0 0 20 17"><path fill="#111" d="M5.5 0.5h9l1 3h3a1.3 1.3 0 0 1 1.3 1.3v9.4a1.3 1.3 0 0 1-1.3 1.3h-17A1.3 1.3 0 0 1 0 14.2V4.8A1.3 1.3 0 0 1 1.3 3.5h3z"/><circle cx="10" cy="9.3" r="5" fill="#fff"/><circle cx="10" cy="9.3" r="3" fill="#111"/><circle cx="17.3" cy="6" r="0.9" fill="#fff"/></svg><svg class="ic" style="left:1496px;top:7.5px" width="13" height="21" viewBox="0 0 13 21"><rect x="3.2" y="0" width="6.4" height="13.5" rx="3.2" fill="#8c8c8c"/><path d="M0.9 8.5v2.3a5.6 5.6 0 0 0 11.2 0V8.5" fill="none" stroke="#8c8c8c" stroke-width="1.2"/><path d="M6.5 16.3v3M2.4 19.6h8.2" stroke="#8c8c8c" stroke-width="1.2" fill="none"/></svg><svg class="ic" style="left:1526px;top:12px" width="21" height="12" viewBox="0 0 21 12"><rect x="0" y="0" width="14" height="11.6" rx="1.3" fill="#8c8c8c"/><path d="M15 3.8L20 0.8V10.9L15 8z" fill="#8c8c8c"/></svg><svg class="ic" style="left:1561px;top:8px" width="19" height="21" viewBox="0 0 19 21"><path d="M14.8 2.45H17.2a.6.6 0 0 1 .6.6V19a.6.6 0 0 1-.6.6H3.7a.6.6 0 0 1-.6-.6V16.9" fill="#fff" stroke="#8c8c8c" stroke-width="1.1"/><rect x="0.55" y="0.55" width="14.2" height="16.3" rx="0.8" fill="#fff" stroke="#8c8c8c" stroke-width="1.1"/><path d="M5.2 4.4H12.7M3.1 8H12.7M3.1 10.4H12.7M3.1 13H12.7" stroke="#8c8c8c" stroke-width="1"/></svg><span class="c" style="left:1624px">Check Out</span><span class="c lk" style="left:1719px">View</span><span class="c pp" style="left:1761px">|</span><span class="c lk" style="left:1777px">Delete</span></div>
<div class="row" style="top:842px;background:#f9f9f9"><span class="cb" style="top:13px"></span><span class="c" style="left:78px">Amanda Loyd&#x27;s Laptop</span><span class="c" style="left:547px">$615.00</span><span class="c" style="left:699px">Dell</span><span class="c" style="left:797px">AAAC</span><span class="c" style="left:1033px">Kearny</span><span class="c" style="left:1182px">Laptop</span><span class="c" style="left:1281px">03/28/2013 04:51 PM</span><svg class="ic" style="left:1458px;top:10px" width="20" height="17" viewBox="0 0 20 17"><path fill="#111" d="M5.5 0.5h9l1 3h3a1.3 1.3 0 0 1 1.3 1.3v9.4a1.3 1.3 0 0 1-1.3 1.3h-17A1.3 1.3 0 0 1 0 14.2V4.8A1.3 1.3 0 0 1 1.3 3.5h3z"/><circle cx="10" cy="9.3" r="5" fill="#fff"/><circle cx="10" cy="9.3" r="3" fill="#111"/><circle cx="17.3" cy="6" r="0.9" fill="#fff"/></svg><svg class="ic" style="left:1496px;top:7.5px" width="13" height="21" viewBox="0 0 13 21"><rect x="3.2" y="0" width="6.4" height="13.5" rx="3.2" fill="#8c8c8c"/><path d="M0.9 8.5v2.3a5.6 5.6 0 0 0 11.2 0V8.5" fill="none" stroke="#8c8c8c" stroke-width="1.2"/><path d="M6.5 16.3v3M2.4 19.6h8.2" stroke="#8c8c8c" stroke-width="1.2" fill="none"/></svg><svg class="ic" style="left:1526px;top:12px" width="21" height="12" viewBox="0 0 21 12"><rect x="0" y="0" width="14" height="11.6" rx="1.3" fill="#8c8c8c"/><path d="M15 3.8L20 0.8V10.9L15 8z" fill="#8c8c8c"/></svg><svg class="ic" style="left:1561px;top:8px" width="19" height="21" viewBox="0 0 19 21"><path d="M14.8 2.45H17.2a.6.6 0 0 1 .6.6V19a.6.6 0 0 1-.6.6H3.7a.6.6 0 0 1-.6-.6V16.9" fill="#fff" stroke="#8c8c8c" stroke-width="1.1"/><rect x="0.55" y="0.55" width="14.2" height="16.3" rx="0.8" fill="#fff" stroke="#8c8c8c" stroke-width="1.1"/><path d="M5.2 4.4H12.7M3.1 8H12.7M3.1 10.4H12.7M3.1 13H12.7" stroke="#8c8c8c" stroke-width="1"/></svg><span class="c" style="left:1624px">Active</span><span class="c lk" style="left:1719px">View</span><span class="c pp" style="left:1761px">|</span><span class="c lk" style="left:1777px">Delete</span></div>
<div class="row" style="top:884px;background:#fff"><span class="cb" style="top:13px"></span><span class="c" style="left:78px">Amanda Loyd&#x27;s Monitor</span><span class="c" style="left:625px">Office 1</span><span class="c" style="left:797px">AAAD</span><span class="c" style="left:1033px">Kearny</span><span class="c" style="left:1182px">Monitor</span><span class="c" style="left:1281px">03/29/2013 09:03 AM</span><svg class="ic" style="left:1458px;top:10px" width="20" height="17" viewBox="0 0 20 17"><path fill="#111" d="M5.5 0.5h9l1 3h3a1.3 1.3 0 0 1 1.3 1.3v9.4a1.3 1.3 0 0 1-1.3 1.3h-17A1.3 1.3 0 0 1 0 14.2V4.8A1.3 1.3 0 0 1 1.3 3.5h3z"/><circle cx="10" cy="9.3" r="5" fill="#fff"/><circle cx="10" cy="9.3" r="3" fill="#111"/><circle cx="17.3" cy="6" r="0.9" fill="#fff"/></svg><svg class="ic" style="left:1496px;top:7.5px" width="13" height="21" viewBox="0 0 13 21"><rect x="3.2" y="0" width="6.4" height="13.5" rx="3.2" fill="#8c8c8c"/><path d="M0.9 8.5v2.3a5.6 5.6 0 0 0 11.2 0V8.5" fill="none" stroke="#8c8c8c" stroke-width="1.2"/><path d="M6.5 16.3v3M2.4 19.6h8.2" stroke="#8c8c8c" stroke-width="1.2" fill="none"/></svg><svg class="ic" style="left:1526px;top:12px" width="21" height="12" viewBox="0 0 21 12"><rect x="0" y="0" width="14" height="11.6" rx="1.3" fill="#8c8c8c"/><path d="M15 3.8L20 0.8V10.9L15 8z" fill="#8c8c8c"/></svg><svg class="ic" style="left:1561px;top:8px" width="19" height="21" viewBox="0 0 19 21"><path d="M14.8 2.45H17.2a.6.6 0 0 1 .6.6V19a.6.6 0 0 1-.6.6H3.7a.6.6 0 0 1-.6-.6V16.9" fill="#fff" stroke="#8c8c8c" stroke-width="1.1"/><rect x="0.55" y="0.55" width="14.2" height="16.3" rx="0.8" fill="#fff" stroke="#8c8c8c" stroke-width="1.1"/><path d="M5.2 4.4H12.7M3.1 8H12.7M3.1 10.4H12.7M3.1 13H12.7" stroke="#8c8c8c" stroke-width="1"/></svg><span class="c" style="left:1624px">Repaired</span><span class="c lk" style="left:1719px">View</span><span class="c pp" style="left:1761px">|</span><span class="c lk" style="left:1777px">Delete</span></div>
<div class="row" style="top:926px;background:#f9f9f9"><span class="cb" style="top:13px"></span><span class="c" style="left:78px">Andrew Jackson&#x27;s Laptop</span><span class="c" style="left:699px">Dell</span><span class="c" style="left:797px">AAAQ</span><span class="c" style="left:1033px">Frisco Office</span><span class="c" style="left:1182px">Laptop</span><span class="c" style="left:1281px">04/24/2013 02:15 PM</span><svg class="ic" style="left:1458px;top:10px" width="20" height="17" viewBox="0 0 20 17"><path fill="#111" d="M5.5 0.5h9l1 3h3a1.3 1.3 0 0 1 1.3 1.3v9.4a1.3 1.3 0 0 1-1.3 1.3h-17A1.3 1.3 0 0 1 0 14.2V4.8A1.3 1.3 0 0 1 1.3 3.5h3z"/><circle cx="10" cy="9.3" r="5" fill="#fff"/><circle cx="10" cy="9.3" r="3" fill="#111"/><circle cx="17.3" cy="6" r="0.9" fill="#fff"/></svg><svg class="ic" style="left:1496px;top:7.5px" width="13" height="21" viewBox="0 0 13 21"><rect x="3.2" y="0" width="6.4" height="13.5" rx="3.2" fill="#8c8c8c"/><path d="M0.9 8.5v2.3a5.6 5.6 0 0 0 11.2 0V8.5" fill="none" stroke="#8c8c8c" stroke-width="1.2"/><path d="M6.5 16.3v3M2.4 19.6h8.2" stroke="#8c8c8c" stroke-width="1.2" fill="none"/></svg><svg class="ic" style="left:1526px;top:12px" width="21" height="12" viewBox="0 0 21 12"><rect x="0" y="0" width="14" height="11.6" rx="1.3" fill="#8c8c8c"/><path d="M15 3.8L20 0.8V10.9L15 8z" fill="#8c8c8c"/></svg><svg class="ic" style="left:1561px;top:8px" width="19" height="21" viewBox="0 0 19 21"><path d="M14.8 2.45H17.2a.6.6 0 0 1 .6.6V19a.6.6 0 0 1-.6.6H3.7a.6.6 0 0 1-.6-.6V16.9" fill="#fff" stroke="#8c8c8c" stroke-width="1.1"/><rect x="0.55" y="0.55" width="14.2" height="16.3" rx="0.8" fill="#fff" stroke="#8c8c8c" stroke-width="1.1"/><path d="M5.2 4.4H12.7M3.1 8H12.7M3.1 10.4H12.7M3.1 13H12.7" stroke="#8c8c8c" stroke-width="1"/></svg><span class="c" style="left:1624px">Check Out</span><span class="c lk" style="left:1719px">View</span><span class="c pp" style="left:1761px">|</span><span class="c lk" style="left:1777px">Delete</span></div>
<div class="a" id="sb"></div>
<div class="a" id="thumb"></div>
<svg class="a" style="left:1907px;top:8px" width="8" height="4" viewBox="0 0 8 4"><path d="M0 4L4 0 8 4z" fill="#a3a3a3"/></svg>
<svg class="a" style="left:1907px;top:944px" width="8" height="5" viewBox="0 0 8 5"><path d="M0 0L4 5 8 0z" fill="#505050"/></svg>
</body></html>
